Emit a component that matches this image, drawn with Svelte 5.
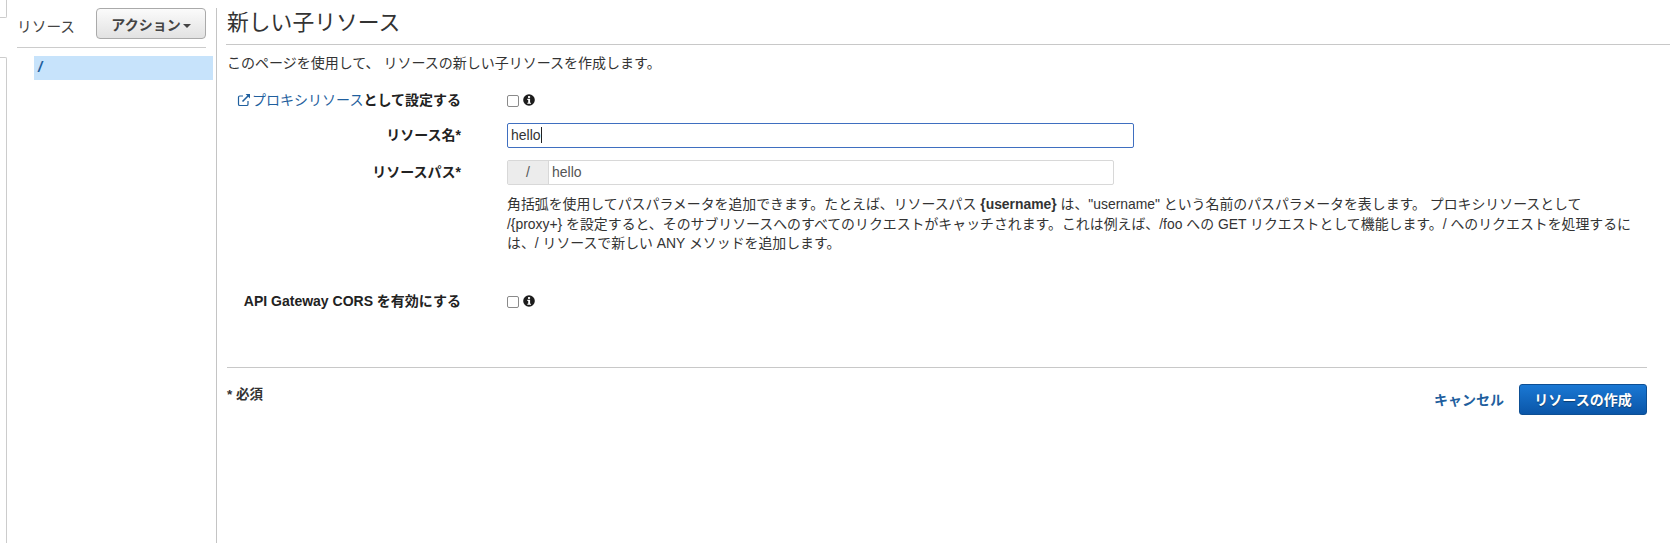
<script>
  const helpLines = [
    ["角括弧を使用してパスパラメータを追加できます。たとえば、リソースパス ", "{username}", " は、\"username\" という名前のパスパラメータを表します。 プロキシリソースとして"],
    ["/{proxy+} を設定すると、そのサブリソースへのすべてのリクエストがキャッチされます。これは例えば、/foo への GET リクエストとして機能します。/ へのリクエストを処理するに"],
    ["は、/ リソースで新しい ANY メソッドを追加します。"]
  ];
</script>

<div class="page">
  <div class="nav-strip">
    <div class="nav-top"></div>
    <div class="nav-bottom"></div>
  </div>

  <aside class="resources">
    <div class="resources-head">
      <span class="resources-title">リソース</span>
      <button class="action-btn">アクション<span class="caret"></span></button>
    </div>
    <div class="tree-row"><span class="tree-item">/</span></div>
  </aside>

  <main class="content">
    <h1>新しい子リソース</h1>
    <p class="intro">このページを使用して、 リソースの新しい子リソースを作成します。</p>

    <div class="row row-proxy">
      <div class="label">
        <svg class="ext-icon" viewBox="0 0 14 14" width="14" height="14" fill="none" stroke="#1f5f9e" stroke-width="1.2">
          <path d="M11 8v3.2a1.3 1.3 0 0 1-1.3 1.3H2.8a1.3 1.3 0 0 1-1.3-1.3V4.3A1.3 1.3 0 0 1 2.8 3H6" />
          <path d="M5.5 8.5 12 2" stroke-width="1.6" />
          <path d="M8.6 1h4.4v4.4z" fill="#1f5f9e" stroke="none" />
        </svg><a href="#proxy">プロキシリソース</a>として設定する
      </div>
      <div class="control check">
        <span class="checkbox"></span>
        <svg class="info" viewBox="0 0 12 12" width="12" height="12">
          <circle cx="6" cy="6" r="5.8" fill="#1c1c1c" />
          <rect x="5" y="2.1" width="2.1" height="1.8" fill="#fff" />
          <path d="M4.3 4.8H7.1V8.7h.9v1.1H4.3V8.7h.9V5.9h-.9z" fill="#fff" />
        </svg>
      </div>
    </div>

    <div class="row row-name">
      <div class="label">リソース名*</div>
      <div class="control">
        <div class="name-input">hello<span class="text-caret"></span></div>
      </div>
    </div>

    <div class="row row-path">
      <div class="label">リソースパス*</div>
      <div class="control">
        <div class="path-input">
          <span class="path-prefix">/</span>
          <span class="path-value">hello</span>
        </div>
      </div>
    </div>

    <div class="row">
      <div class="label"></div>
      <p class="help">
        {#each helpLines as line}
          {#if line.length === 3}{line[0]}<b>{line[1]}</b>{line[2]}{:else}{line[0]}{/if}<br />
        {/each}
      </p>
    </div>

    <div class="row row-cors">
      <div class="label">API Gateway CORS を有効にする</div>
      <div class="control check">
        <span class="checkbox"></span>
        <svg class="info" viewBox="0 0 12 12" width="12" height="12">
          <circle cx="6" cy="6" r="5.8" fill="#1c1c1c" />
          <rect x="5" y="2.1" width="2.1" height="1.8" fill="#fff" />
          <path d="M4.3 4.8H7.1V8.7h.9v1.1H4.3V8.7h.9V5.9h-.9z" fill="#fff" />
        </svg>
      </div>
    </div>

    <div class="footer">
      <span class="required">* 必須</span>
      <div class="footer-actions">
        <a class="cancel" href="#cancel">キャンセル</a>
        <button class="create-btn">リソースの作成</button>
      </div>
    </div>
  </main>
</div>

<style>
  :global(body) {
    margin: 0;
    background: #fff;
  }

  .page {
    display: flex;
    height: 543px;
    overflow: hidden;
    font-family: "Liberation Sans", "Noto Sans CJK JP", sans-serif;
    font-size: 14px;
    color: #333;
  }

  .nav-strip {
    width: 7px;
    flex: none;
    display: flex;
    flex-direction: column;
    gap: 39px;
  }

  .nav-top {
    height: 18px;
    border-right: 1px solid #ccc;
    border-bottom: 1px solid #ccc;
    border-bottom-right-radius: 2px;
    box-sizing: border-box;
  }

  .nav-bottom {
    flex: 1;
    border-right: 1px solid #ccc;
    border-top: 1px solid #ccc;
    border-top-right-radius: 2px;
  }

  .resources {
    width: 210px;
    flex: none;
    box-sizing: border-box;
    padding-left: 10px;
    border-right: 1px solid #c4c4c4;
    margin-top: 8px;
  }

  .resources-head {
    display: flex;
    justify-content: space-between;
    align-items: flex-start;
    width: 189px;
    height: 39px;
    border-bottom: 1px solid #ccc;
  }

  .resources-title {
    font-size: 14.7px;
    color: #444;
    padding-top: 7px;
  }

  .action-btn {
    width: 110px;
    height: 31px;
    padding: 0;
    border: 1px solid #aaa;
    border-radius: 4px;
    background: linear-gradient(#fbfbfb, #e2e2e2);
    font: bold 14px "Liberation Sans", "Noto Sans CJK JP", sans-serif;
    color: #444;
  }

  .caret {
    display: inline-block;
    margin-left: 2px;
    vertical-align: middle;
    border-left: 4px solid transparent;
    border-right: 4px solid transparent;
    border-top: 4px solid #444;
  }

  .tree-row {
    margin: 8px 0 0 17px;
    width: 179px;
    height: 24px;
    background: #c7e3fb;
    line-height: 22px;
  }

  .tree-item {
    padding-left: 4px;
    font-weight: bold;
    font-style: italic;
    font-size: 15px;
    color: #1f5f9e;
  }

  .content {
    flex: 1;
    min-width: 0;
    padding-left: 9px;
  }

  h1 {
    margin: 8px 0 0;
    padding: 1px 0 0 1px;
    height: 35px;
    border-bottom: 1px solid #c8c8c8;
    font-size: 21.8px;
    font-weight: normal;
    line-height: 28px;
    color: #333;
  }

  .intro {
    margin: 9px 0 0 1px;
    line-height: 18px;
    color: #333;
  }

  .row {
    display: flex;
  }

  .label {
    width: 235px;
    flex: none;
    text-align: right;
    font-weight: bold;
    color: #222;
    white-space: nowrap;
  }

  .label a {
    font-weight: normal;
    color: #1f5f9e;
    text-decoration: none;
  }

  .ext-icon {
    vertical-align: -2px;
    margin-right: 1px;
  }

  .control {
    margin-left: 46px;
    flex: 1;
  }

  .check {
    display: flex;
    gap: 4px;
    align-items: flex-start;
  }

  .checkbox {
    width: 10px;
    height: 10px;
    margin-top: 1px;
    border: 1px solid #8a8a8a;
    border-radius: 2px;
    background: #fff;
  }

  .info {
    display: block;
  }

  .row-proxy {
    margin-top: 18px;
    line-height: 20px;
    height: 20px;
  }

  .row-proxy .check {
    padding-top: 4px;
  }

  .row-name {
    margin-top: 13px;
    line-height: 25px;
  }

  .name-input {
    width: 622px;
    height: 23px;
    border: 1px solid #3f6fc0;
    border-radius: 2px;
    padding-left: 3px;
    line-height: 23px;
    color: #333;
  }

  .text-caret {
    display: inline-block;
    width: 1px;
    height: 16px;
    background: #222;
    vertical-align: -3px;
  }

  .row-path {
    margin-top: 12px;
    line-height: 25px;
  }

  .path-input {
    display: flex;
    width: 605px;
    height: 23px;
    border: 1px solid #d8d8d8;
    border-radius: 2px;
  }

  .path-prefix {
    width: 40px;
    text-align: center;
    background: #ececec;
    border-right: 1px solid #d8d8d8;
    color: #555;
    line-height: 23px;
  }

  .path-value {
    padding-left: 3px;
    line-height: 23px;
    color: #555;
  }

  .help {
    margin: 10px 0 0 46px;
    font-size: 13.9px;
    line-height: 19.5px;
    color: #333;
    white-space: nowrap;
  }

  .row-cors {
    margin-top: 37px;
    line-height: 20px;
    height: 20px;
  }

  .row-cors .check {
    padding-top: 4px;
  }

  .footer {
    display: flex;
    justify-content: space-between;
    margin: 56px 23px 0 1px;
    border-top: 1px solid #c8c8c8;
    padding-top: 16px;
  }

  .required {
    margin-top: -1px;
    font-weight: bold;
    font-size: 13.5px;
    color: #333;
  }

  .footer-actions {
    display: flex;
    align-items: center;
    gap: 15px;
  }

  .cancel {
    font-weight: bold;
    color: #1f5f9e;
    text-decoration: none;
  }

  .create-btn {
    width: 128px;
    height: 31px;
    padding: 0;
    border: 1px solid #0d4f94;
    border-radius: 3px;
    background: linear-gradient(#1a78d4, #0b56a8);
    font: bold 14px "Liberation Sans", "Noto Sans CJK JP", sans-serif;
    color: #fff;
    text-shadow: 0 1px 1px rgba(0, 0, 0, 0.4);
  }
</style>
